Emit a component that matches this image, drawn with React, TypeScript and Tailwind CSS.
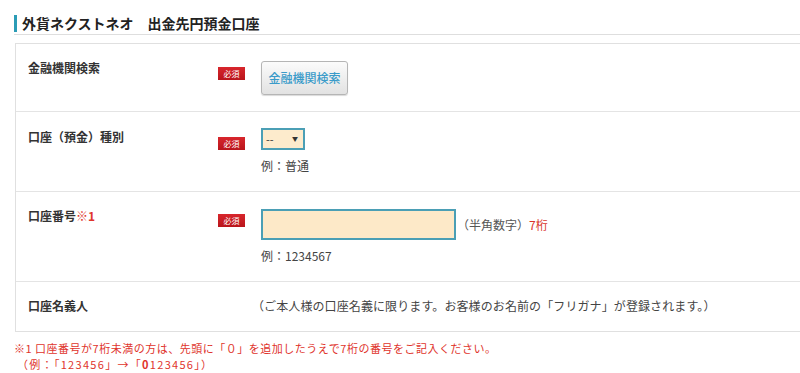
const jp = { fontFamily: '"Noto Sans CJK JP", "Noto Sans", sans-serif' };

function Badge() {
    return (
        <span className="flex h-[13px] w-[27px] items-center justify-center bg-gradient-to-b from-[#d8262c] to-[#b9151b] text-[8px] leading-none text-white">
            必須
        </span>
    );
}

export default function App() {
    return (
        <div className="h-[373px] w-[800px] overflow-hidden bg-white text-[12px] text-[#333]" style={jp}>
            <div className="ml-[14px] border-b border-[#dedede] pt-[15px] pb-[2px]">
                <h2 className="border-l-[3px] border-[#2b9cb6] pl-[5px] text-[14px] font-bold leading-[17px] text-[#222]">
                    外貨ネクストネオ　出金先円預金口座
                </h2>
            </div>

            <div className="ml-[15px] mt-[8px] border-l border-t border-b border-[#e0e0e0]">
                {/* 金融機関検索 */}
                <div className="flex h-[68px] border-b border-[#e4e4e4] pt-[17px]">
                    <div className="w-[202px] pl-[12px] font-semibold leading-[14px]">金融機関検索</div>
                    <div className="w-[43px] pt-[6px]">
                        <Badge />
                    </div>
                    <button className="h-[34px] w-[87px] rounded-[3px] border border-[#b5b5b5] bg-gradient-to-b from-[#fbfbfb] to-[#e2e2e2] text-[12px] font-medium text-[#3a9bc9] shadow-[0_1px_1px_rgba(0,0,0,0.15)]">
                        金融機関検索
                    </button>
                </div>

                {/* 口座（預金）種別 */}
                <div className="flex h-[80px] border-b border-[#e4e4e4] pt-[16px]">
                    <div className="w-[202px] pl-[12px] pt-[2px] font-semibold leading-[14px]">口座（預金）種別</div>
                    <div className="w-[43px] pt-[9px]">
                        <Badge />
                    </div>
                    <div className="flex flex-col">
                        <div className="flex h-[22px] w-[44px] items-center justify-between border-2 border-[#4b9fb5] bg-[#fdebcc] pl-[3px] pr-[5px] text-[11px] leading-none">
                            <span>--</span>
                            <span className="text-[6px]">▼</span>
                        </div>
                        <div className="mt-[9px] leading-[14px] text-[#444]">例：普通</div>
                    </div>
                </div>

                {/* 口座番号 */}
                <div className="flex h-[90px] border-b border-[#e4e4e4] pt-[17px]">
                    <div className="w-[202px] pl-[12px] font-semibold leading-[14px]">
                        口座番号<span className="text-[#e0342c]">※1</span>
                    </div>
                    <div className="w-[43px] pt-[5px]">
                        <Badge />
                    </div>
                    <div className="flex flex-col">
                        <div className="flex items-center">
                            <div className="h-[31px] w-[195px] border-2 border-[#4b9fb5] bg-[#fde9c8]" />
                            <span className="ml-[1px] text-[#555]">
                                （半角数字）<span className="text-[#d9332b]">7桁</span>
                            </span>
                        </div>
                        <div className="mt-[9px] leading-[14px] text-[#444]">例：1234567</div>
                    </div>
                </div>

                {/* 口座名義人 */}
                <div className="flex h-[49px] items-center pb-[1px]">
                    <div className="w-[236px] pl-[12px] font-semibold leading-[14px]">口座名義人</div>
                    <div className="leading-[14px] tracking-[0.1px] text-[#444]">
                        （ご本人様の口座名義に限ります。お客様のお名前の「フリガナ」が登録されます。）
                    </div>
                </div>
            </div>

            <div className="ml-[14px] mt-[8px] text-[11px] leading-[16px] text-[#e0342c]">
                <p className="tracking-[0.5px]">※1 口座番号が7桁未満の方は、先頭に「０」を追加したうえで7桁の番号をご記入ください。</p>
                <p className="pl-[3px] tracking-[1.3px]">
                    （例：「123456」→「<span className="font-bold">0</span>123456」）
                </p>
            </div>
        </div>
    );
}
